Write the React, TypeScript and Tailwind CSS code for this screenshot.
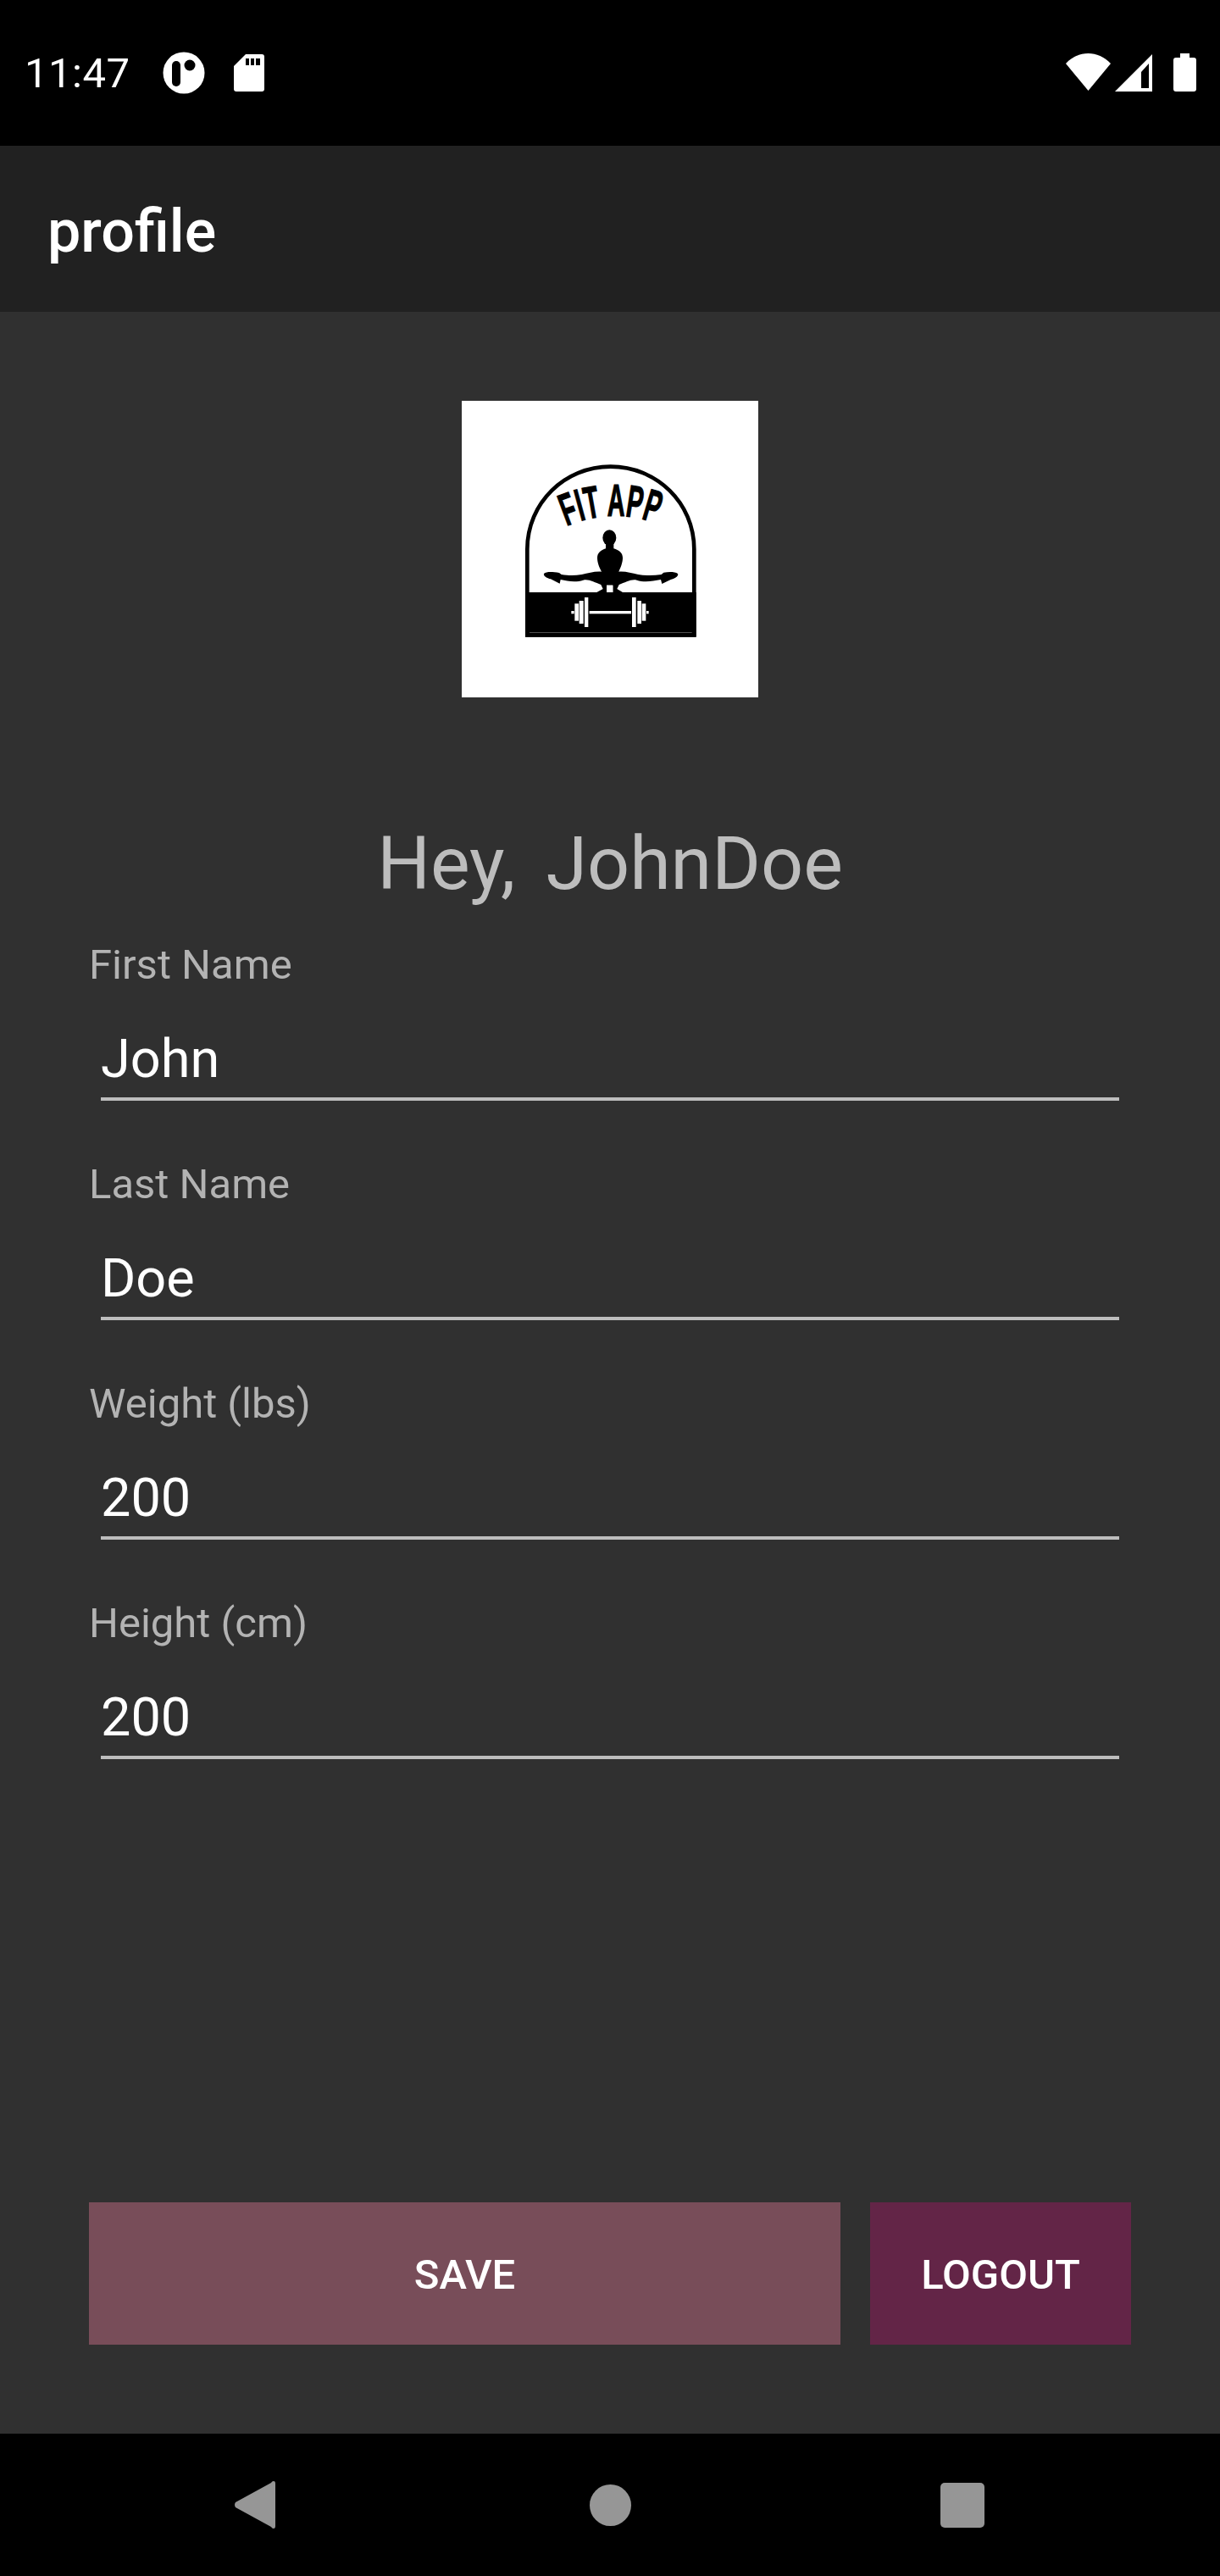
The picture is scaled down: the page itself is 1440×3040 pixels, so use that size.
const fields = [
  { label: "First Name", value: "John" },
  { label: "Last Name", value: "Doe" },
  { label: "Weight (lbs)", value: "200" },
  { label: "Height (cm)", value: "200" },
]

function Logo() {
  return (
    <svg width="220" height="220" viewBox="0 0 660 660">
      <path d="M37 628 V325 C37 160 170 32 332 32 C495 32 628 160 628 325 V628 Z" fill="none" stroke="#000" strokeWidth="14" />
      <rect x="30" y="477" width="605" height="158" fill="#000" />
      <rect x="45" y="619" width="575" height="2" fill="#777" />
      <path id="logo-arc" d="M176 243 A420 420 0 0 1 494 233" fill="none" />
      <text fontFamily="'Liberation Sans Narrow','Liberation Sans',sans-serif" fontWeight="700" fontSize="160" fill="#000" stroke="#000" strokeWidth="4">
        <textPath href="#logo-arc" textLength="326" lengthAdjust="spacingAndGlyphs">FIT APP</textPath>
      </text>
      {/* figure */}
      <ellipse cx="328" cy="284" rx="24" ry="28" fill="#000" />
      <path
        fill="#000"
        d="M315 300 H343 V322 C362 327 375 338 375 355 C375 375 366 392 361 404 C385 402 405 409 430 414 C455 418 485 418 512 414 L520 407 C540 404 560 404 570 411 C574 419 560 428 545 432 L514 447 L510 432 C480 438 450 442 425 434 C405 429 385 442 362 450 L355 465 L375 477 H340 V452 H318 V477 H283 L305 465 L298 450 C275 442 255 429 235 434 C210 442 180 438 155 432 L152 446 L120 430 C105 426 94 420 96 411 C105 403 125 404 150 408 L158 414 C185 418 205 418 230 414 C255 409 275 402 300 404 C294 392 285 375 285 355 C285 338 298 327 315 322 Z"
      />
      <path fill="#fff" d="M318 452 H340 V477 H318 Z" />
      {/* dumbbell */}
      <g fill="#fff">
        <rect x="257" y="543" width="148" height="10" />
        <rect x="193" y="543" width="10" height="10" />
        <rect x="205" y="517" width="14" height="61" />
        <rect x="221" y="507" width="15" height="81" />
        <rect x="240" y="495" width="13" height="105" />
        <rect x="408" y="495" width="14" height="105" />
        <rect x="427" y="507" width="14" height="81" />
        <rect x="443" y="517" width="14" height="61" />
        <rect x="459" y="543" width="8" height="10" />
      </g>
    </svg>
  )
}

export default function App() {
  return (
    <div className="w-[1440px] h-[3040px] flex flex-col bg-[#303030] font-[Roboto,sans-serif] overflow-hidden">
      {/* status bar */}
      <div className="h-[172px] bg-black flex items-start text-white">
        <span className="ml-[29px] mt-[58px] text-[49px] leading-[57px] tracking-[0.5px]">11:47</span>
        <svg className="ml-[38px] mt-[61px]" width="50" height="50" viewBox="0 0 50 50">
          <circle cx="25" cy="25" r="24.5" fill="#fff" />
          <rect x="11" y="11" width="10" height="30" rx="5" fill="#000" />
          <circle cx="32" cy="16" r="6.5" fill="#000" />
        </svg>
        <svg className="ml-[34px] mt-[64px]" width="36" height="45" viewBox="0 0 36 45">
          <path d="M14 0 H33 Q36 0 36 3 V41 Q36 44 33 44 H3 Q0 44 0 41 V14 Z" fill="#fff" />
          <path d="M14 5 H18 V13 H14 Z M20 5 H24 V13 H20 Z M26 5 H31 V13 H26 Z" fill="#000" />
        </svg>
        <svg className="ml-auto mt-[63px]" width="53" height="45" viewBox="0 0 53 45">
          <path d="M0 12 C15 -4 38 -4 53 12 L26.500 44 Z" fill="#fff" />
        </svg>
        <svg className="ml-[5px] mt-[64px]" width="44" height="44" viewBox="0 0 44 44">
          <path fill="#fff" fillRule="evenodd" d="M44 0 V44 H0 Z M40 11 L31 21 V40 H40 Z" />
        </svg>
        <svg className="ml-[25px] mr-[28px] mt-[63px]" width="27" height="46" viewBox="0 0 27 46">
          <path d="M8 0 H19 V5 H24 Q27 5 27 8 V42 Q27 45 24 45 H3 Q0 45 0 42 V8 Q0 5 3 5 H8 Z" fill="#fff" />
        </svg>
      </div>

      {/* toolbar */}
      <div className="h-[196px] bg-[#212121] flex items-center pl-[56px] pt-[6px]">
        <h1 className="text-[70px] leading-[82px] font-medium text-white">profile</h1>
      </div>

      {/* content */}
      <div className="flex-1 flex flex-col px-[105px] pt-[105px] pb-[105px]">
        <div className="self-center w-[350px] h-[350px] pt-[4px] bg-white flex items-center justify-center">
          <Logo />
        </div>
        <div className="mt-[144px] flex justify-center gap-[36px] text-[88px] leading-[103px] text-[#bdbdbd]">
          <span>Hey,</span>
          <span>JohnDoe</span>
        </div>

        <div className="flex flex-col mt-[40px]">
          {fields.map((f) => (
            <div key={f.label} className="h-[259px]">
              <label className="block text-[49px] leading-[57px] text-[#b3b3b3]">{f.label}</label>
              <div className="ml-[14px] mr-[14px] mt-[46px] h-[86px] border-b-[4px] border-[#bdbdbd] text-[63px] leading-[74px] text-white">
                {f.value}
              </div>
            </div>
          ))}
        </div>

        <div className="mt-auto flex gap-[35px] h-[168px] text-white text-[49px] font-medium">
          <button className="w-[887px] bg-[#784d59] pt-[3px]">SAVE</button>
          <button className="w-[308px] bg-[#632547] pt-[3px]">LOGOUT</button>
        </div>
      </div>

      {/* nav bar */}
      <div className="h-[168px] bg-black flex items-center pl-[276px]">
        <svg width="50" height="56" viewBox="0 0 50 56">
          <path d="M47 0 Q49 0 49 3 V53 Q49 56 47 56 Q45 56 44 54 L2 31 Q0 28 2 25 L44 2 Q45 0 47 0 Z" fill="#969696" />
        </svg>
        <div className="ml-[370px] w-[49px] h-[49px] rounded-full bg-[#969696]" />
        <div className="ml-[365px] w-[52px] h-[53px] rounded-[5px] bg-[#969696]" />
      </div>
    </div>
  )
}
